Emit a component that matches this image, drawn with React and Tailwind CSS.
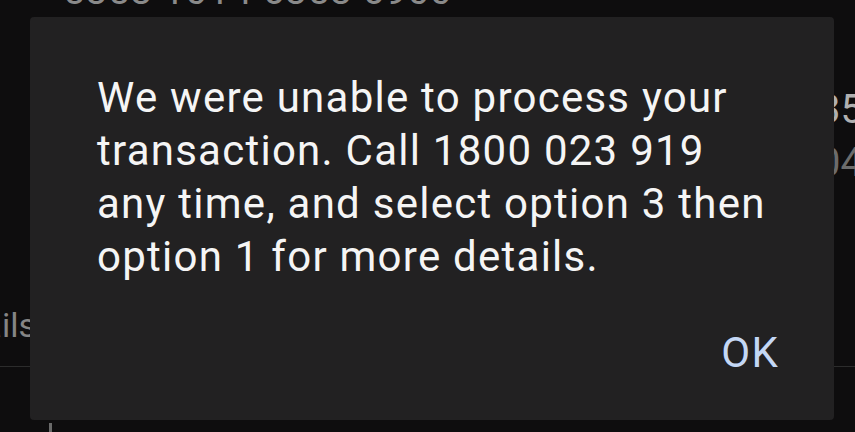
import React from "react";

const roboto = { fontFamily: "Roboto, 'Noto Sans', sans-serif" };

export default function App() {
  return (
    <div
      className="relative h-[432px] w-[855px] overflow-hidden bg-[#0e0d0e]"
      style={roboto}
    >
      {/* page behind the dialog */}
      <div className="flex h-full flex-col">
        <div className="-mt-[29px] pl-[63px] text-[39px] leading-[40px] tracking-[0.5px] text-[#8a8a8a]">
          5353 1014 6353 6900
        </div>
        <div className="flex flex-col items-end">
          <div className="-mr-[8px] mt-[79px] text-[40px] leading-[40px] text-[#b0b0b0]">
            $1,235
          </div>
          <div className="-mr-[8px] mt-[13px] text-[40px] leading-[40px] text-[#6c6c6c]">
            1,904
          </div>
        </div>
        <div className="-ml-[68px] mt-[122px] text-[34px] leading-[40px] text-[#858585]">
          Details
        </div>
        <div className="mt-[21px] h-px w-full bg-[#2c2c2c]" />
        <div className="ml-[49px] mt-[56px] h-[12px] w-[3px] bg-[#6a6a6a]" />
      </div>

      {/* modal dialog */}
      <div className="absolute left-[30px] top-[17px] flex h-[403px] w-[804px] flex-col rounded-[4px] bg-[#222122]">
        <p className="pl-[67px] pr-[40px] pt-[54px] text-[42px] leading-[53px] tracking-[1.25px] text-[#f5f5f5]">
          We were unable to process your
          <br />
          transaction. Call 1800 023 919
          <br />
          any time, and select option 3 then
          <br />
          option 1 for more details.
        </p>
        <div className="mt-auto flex justify-end pb-[45px] pr-[55px]">
          <span className="text-[42px] leading-[44px] tracking-[1.25px] text-[#c4d7f5]">
            OK
          </span>
        </div>
      </div>
    </div>
  );
}
